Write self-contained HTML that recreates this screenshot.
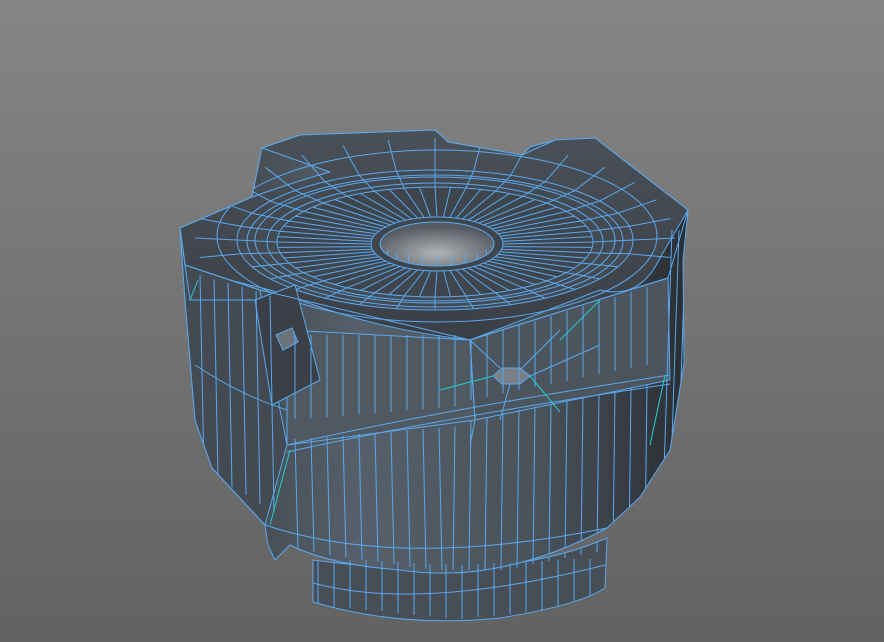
<!DOCTYPE html>
<html><head><meta charset="utf-8"><style>
html,body{margin:0;padding:0;width:884px;height:642px;overflow:hidden;background:linear-gradient(#858585,#626262);}
svg{display:block}
</style></head><body>
<svg width="884" height="642" viewBox="0 0 884 642" xmlns="http://www.w3.org/2000/svg">
<defs>
<linearGradient id="body" x1="0" x2="1" y1="0" y2="0">
<stop offset="0" stop-color="#3a3f45"/><stop offset="0.35" stop-color="#56606a"/><stop offset="0.7" stop-color="#4a525a"/><stop offset="1" stop-color="#2a2e33"/>
</linearGradient>
<linearGradient id="top" x1="0" x2="0" y1="0" y2="1">
<stop offset="0" stop-color="#4a5058"/><stop offset="1" stop-color="#3a3f45"/>
</linearGradient>
<radialGradient id="hole" cx="0.5" cy="0.7" r="0.6">
<stop offset="0" stop-color="#b0b4b8"/><stop offset="1" stop-color="#555b62"/>
</radialGradient>
<clipPath id="cl">
<path d="M180,228 L252,197 L262,148 L300,135 L435,130 L448,142 L522,155 L530,147 L555,140 L595,138 L688,210 L683,260 L684,363 L670,450 L640,497 L607,528 Q500,585 400,570 Q330,565 290,545 L275,560 L268,545 L265,525 L212,468 L195,420 L185,300 Z"/>
<path d="M313,560 L313,602 Q400,628 500,618 Q580,605 605,588 L607,538 Q500,585 313,560Z"/>
</clipPath>
</defs>
<g stroke="#5aa8ee" stroke-width="1" stroke-linejoin="round">
<path d="M313,560 L313,602 Q400,628 500,618 Q580,605 605,588 L607,538 Q500,585 313,560Z" fill="#474e56"/>
<path d="M313,583 Q420,612 605,565" fill="none"/>
<path d="M180,228 L252,197 L262,148 L300,135 L435,130 L448,142 L522,155 L530,147 L555,140 L595,138 L688,210 L683,260 L684,363 L670,450 L640,497 L607,528 Q500,585 400,570 Q330,565 290,545 L275,560 L268,545 L265,525 L212,468 L195,420 L185,300 Z" fill="url(#body)"/>
<path d="M180,228 L252,197 Q300,180 330,172 L262,148 L300,135 L435,130 L448,142 L522,155 L555,140 L595,138 L688,210 L660,258 Q640,300 600,290 L470,340 Q380,330 300,300 L270,290 L210,275 L185,265Z" fill="url(#top)"/>
<ellipse cx="435" cy="240" rx="198" ry="70" fill="#444a51"/>
<ellipse cx="435" cy="242" rx="158" ry="55" fill="#3f454c"/>
<ellipse cx="437" cy="244" rx="57" ry="22" fill="url(#hole)"/>
<ellipse cx="437" cy="244" rx="66" ry="27" fill="none"/>
<g id="rad" fill="none" clip-path="url(#cl)"></g>
<path d="M470,340 L668,278 L670,380 L475,420Z" fill="#4c545d"/>
<path d="M287,330 L470,340 L475,420 L287,445Z" fill="#505962" />
<path d="M180,228 L185,300 L195,420 L212,468 L265,525 L287,445 L280,410 L260,290 L185,265Z" fill="#434a52"/>
<path d="M255,300 L295,285 L320,380 L272,405Z" fill="#3a4046"/>
<path d="M276,335 L292,328 L298,342 L283,350Z" fill="#6a727a"/>
<path d="M493,376 L502,368 L520,368 L530,376 L520,384 L502,384Z" fill="#7a8088"/>
<path d="M287,445 Q440,410 670,375" fill="none"/>
<path d="M287,452 Q440,418 670,384" fill="none"/>
<path d="M195,365 Q240,395 287,410" fill="none"/>
<path d="M265,525 Q400,570 607,528" fill="none"/>
<path d="M180,228 L185,265 L260,290 L470,340 L668,278 L688,210" fill="none"/>
<path d="M185,265 L190,300 L255,300" fill="none"/>
<path d="M470,340 L475,420 L470,445" fill="none"/>
<path d="M520,370 L560,330 M500,368 L470,340 M530,376 L600,345 M510,384 L500,420" fill="none"/>
<g id="vert" fill="none" clip-path="url(#cl)"></g>
</g>
<g stroke="#20d0d0" stroke-width="1" fill="none">
<path d="M530,376 L560,412"/><path d="M493,376 L440,390"/><path d="M560,340 L600,300"/>
<path d="M270,525 L290,450"/><path d="M650,445 L665,375"/><path d="M190,300 L198,280"/>
</g>
</svg>
<script>
(function(){
var ns="http://www.w3.org/2000/svg";
var r=document.getElementById("rad"),s="";
for(var i=0;i<64;i++){var a=i/64*Math.PI*2,c=Math.cos(a),n=Math.sin(a);
s+="M"+(437+66*c).toFixed(1)+","+(244+27*n).toFixed(1)+"L"+(435+158*c).toFixed(1)+","+(242+55*n).toFixed(1)+" ";
if(i%2==0)s+="M"+(435+158*c).toFixed(1)+","+(242+55*n).toFixed(1)+"L"+(435+198*c).toFixed(1)+","+(240+70*n).toFixed(1)+" ";
if(i%2==0&&n<0.2)s+="M"+(435+198*c).toFixed(1)+","+(240+70*n).toFixed(1)+"L"+(435+240*c).toFixed(1)+","+(238+100*n).toFixed(1)+" ";}
for(var i=0;i<24;i++){var a=i/24*Math.PI*2;s+="M"+(437+57*Math.cos(a)).toFixed(1)+","+(244+22*Math.sin(a)).toFixed(1)+"l0,"+(-10*Math.max(0,Math.sin(a))).toFixed(1)+" ";}
var p=document.createElementNS(ns,"path");p.setAttribute("d",s);r.appendChild(p);
var e=[[435,240,180,63],[435,242,168,59],[435,241,188,66],[437,236,220,86]];
e.forEach(function(q){var el=document.createElementNS(ns,"ellipse");el.setAttribute("cx",q[0]);el.setAttribute("cy",q[1]);el.setAttribute("rx",q[2]);el.setAttribute("ry",q[3]);r.appendChild(el);});
var v=document.getElementById("vert"),t="";
for(var x=295;x<=660;x+=16){var yb=545+(x<450?(x-295)*0.15:(607-x)*0.2)+5;var ty=x<470?440-(x-287)*0.08:420-(x-470)*0.2;
t+="M"+x+","+ty.toFixed(0)+"L"+(x+(x<450?3:-2))+","+Math.min(yb,570).toFixed(0)+" ";
var tt=x<470?335:340-(x-470)*0.3;t+="M"+x+","+tt.toFixed(0)+"L"+x+","+(ty-20).toFixed(0)+" ";}
for(var x=200;x<=280;x+=14){t+="M"+x+","+(270+(x-185)*0.3).toFixed(0)+"L"+(x+4)+","+(470+(x-200)*0.6).toFixed(0)+" ";}
for(var x=318;x<=600;x+=16){t+="M"+x+","+(565+Math.abs(x-460)*-0.05).toFixed(0)+"L"+x+","+(605+(x<460?(x-318)*0.1:(600-x)*0.1)).toFixed(0)+" ";}
for(var x=672;x<=686;x+=7){t+="M"+x+","+(230)+"L"+(x-8)+","+(470)+" ";}
var p2=document.createElementNS(ns,"path");p2.setAttribute("d",t);v.appendChild(p2);
})();
</script>
</body></html>
